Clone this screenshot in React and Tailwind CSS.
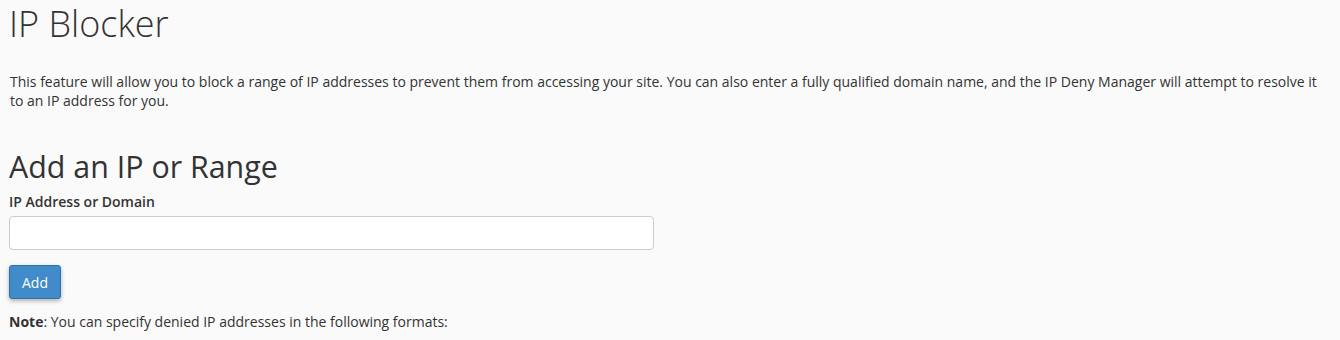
export default function App() {
  return (
    <div className="min-h-[340px] bg-[#fafafa] px-[9px] text-[14px] leading-[19px] text-[#333]" style={{ fontFamily: '"Open Sans", sans-serif' }}>
      <h1 className="pt-[4px] text-[36px] font-light leading-[40px]">IP Blocker</h1>
      <p className="mt-[28px] pl-px">
        This feature will allow you to block a range of IP addresses to prevent them from accessing your site. You can also enter a fully qualified domain name, and the IP Deny Manager will attempt to resolve it to an IP address for you.
      </p>
      <h2 className="mt-[40px] text-[30.4px] font-normal leading-[33px]">Add an IP or Range</h2>
      <label className="mt-[9px] block font-semibold leading-[20px]">IP Address or Domain</label>
      <input type="text" className="mt-[4px] block h-[34px] w-[645px] rounded-[4px] border border-[#ccc] bg-white px-3" />
      <button className="mt-[15px] block h-[34px] w-[52px] rounded-[3px] border border-[#2f72b3] bg-[#428bca] text-center text-white shadow-[0_2px_4px_rgba(0,0,0,0.3)]">Add</button>
      <p className="mt-[13px]"><strong className="font-bold">Note</strong>: You can specify denied IP addresses in the following formats:</p>
    </div>
  );
}
